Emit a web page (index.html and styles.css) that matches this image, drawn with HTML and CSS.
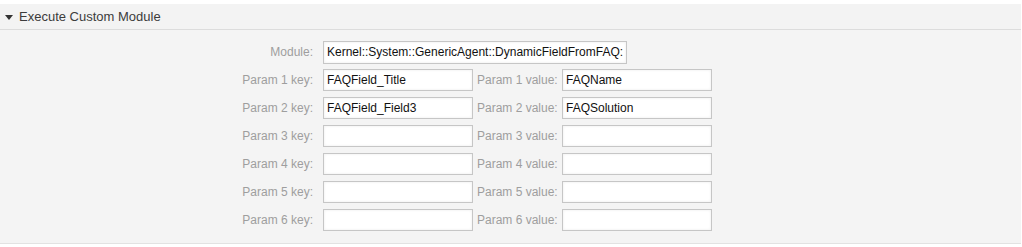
FILE: index.html
```html
<!DOCTYPE html>
<html lang="en">
<head>
    <meta charset="UTF-8">
    <title>Execute Custom Module</title>
    <link rel="stylesheet" href="styles.css">
</head>
<body>
    <div class="widget">
        <div class="widget-header">
            <span class="toggle"></span>
            <h2>Execute Custom Module</h2>
        </div>
        <div class="widget-content">
            <div class="row">
                <label class="key-label" for="module">Module:</label>
                <input class="field wide" id="module" type="text" value="Kernel::System::GenericAgent::DynamicFieldFromFAQ::Run">
            </div>
            <div class="row">
                <label class="key-label" for="k1">Param 1 key:</label>
                <input class="field" id="k1" type="text" value="FAQField_Title">
                <label class="value-label" for="v1">Param 1 value:</label>
                <input class="field" id="v1" type="text" value="FAQName">
            </div>
            <div class="row">
                <label class="key-label" for="k2">Param 2 key:</label>
                <input class="field" id="k2" type="text" value="FAQField_Field3">
                <label class="value-label" for="v2">Param 2 value:</label>
                <input class="field" id="v2" type="text" value="FAQSolution">
            </div>
            <div class="row">
                <label class="key-label" for="k3">Param 3 key:</label>
                <input class="field" id="k3" type="text">
                <label class="value-label" for="v3">Param 3 value:</label>
                <input class="field" id="v3" type="text">
            </div>
            <div class="row">
                <label class="key-label" for="k4">Param 4 key:</label>
                <input class="field" id="k4" type="text">
                <label class="value-label" for="v4">Param 4 value:</label>
                <input class="field" id="v4" type="text">
            </div>
            <div class="row">
                <label class="key-label" for="k5">Param 5 key:</label>
                <input class="field" id="k5" type="text">
                <label class="value-label" for="v5">Param 5 value:</label>
                <input class="field" id="v5" type="text">
            </div>
            <div class="row">
                <label class="key-label" for="k6">Param 6 key:</label>
                <input class="field" id="k6" type="text">
                <label class="value-label" for="v6">Param 6 value:</label>
                <input class="field" id="v6" type="text">
            </div>
        </div>
    </div>
</body>
</html>
```

FILE: styles.css
```css
body {
    margin: 0;
    background: #fff;
    font-family: "Liberation Sans", Arial, sans-serif;
}
.widget {
    margin: 4px 1px 0 0;
    background: #f4f4f4;
    border-bottom: 1px solid #e2e2e2;
}
.widget-header {
    display: flex;
    align-items: center;
    height: 25px;
    padding-left: 5px;
    background: #f3f3f3;
    border-bottom: 1px solid #dcdcdc;
}
.toggle {
    width: 0;
    height: 0;
    border-left: 4px solid transparent;
    border-right: 4px solid transparent;
    border-top: 5px solid #333;
    margin: 1px 6px 0 0;
}
.widget-header h2 {
    margin: 0;
    font-size: 13px;
    font-weight: normal;
    color: #3c3c3c;
}
.widget-content {
    display: flex;
    flex-direction: column;
    gap: 6px;
    padding: 11px 0 12px;
}
.row {
    display: flex;
    align-items: center;
    height: 22px;
}
.key-label,
.value-label {
    font-size: 12px;
    color: #9e9e9e;
    text-align: right;
}
.key-label {
    width: 313px;
    margin-right: 10px;
}
.value-label {
    width: 81px;
    margin: 0 4px;
    text-align: left;
}
.field {
    box-sizing: border-box;
    width: 150px;
    height: 22px;
    padding: 0 3px;
    border: 1px solid #c6c6c6;
    background: #fff;
    box-shadow: inset 0 0 3px rgba(0, 0, 0, 0.08);
    font-family: "Liberation Sans", Arial, sans-serif;
    font-size: 12px;
    color: #111;
    outline: none;
}
.field.wide {
    width: 304px;
    height: 23px;
}
```
